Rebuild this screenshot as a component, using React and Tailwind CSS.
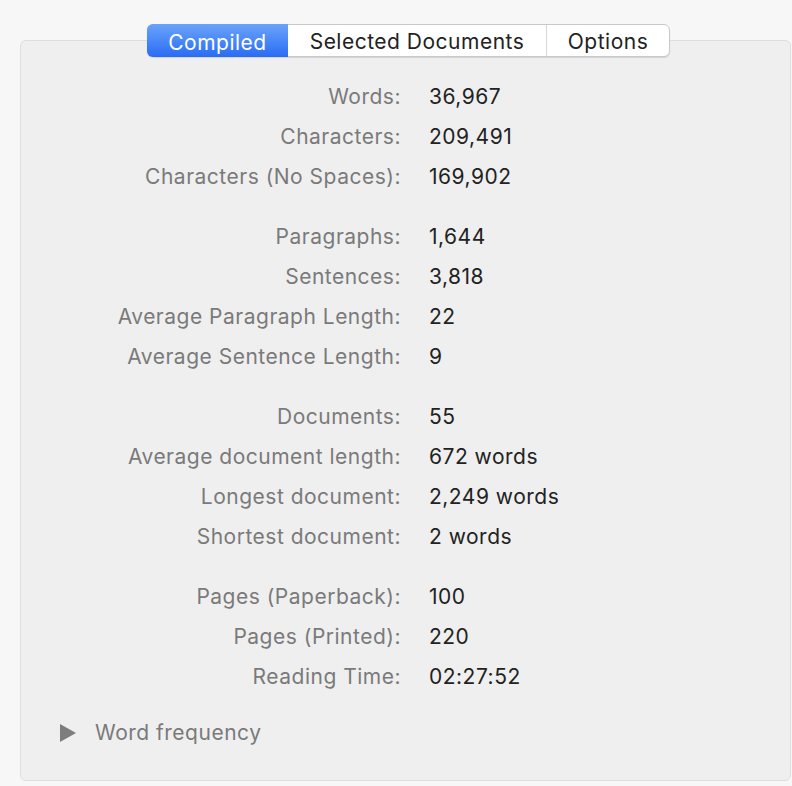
import React from "react";

const groups = [
  [
    ["Words:", "36,967"],
    ["Characters:", "209,491"],
    ["Characters (No Spaces):", "169,902"],
  ],
  [
    ["Paragraphs:", "1,644"],
    ["Sentences:", "3,818"],
    ["Average Paragraph Length:", "22"],
    ["Average Sentence Length:", "9"],
  ],
  [
    ["Documents:", "55"],
    ["Average document length:", "672 words"],
    ["Longest document:", "2,249 words"],
    ["Shortest document:", "2 words"],
  ],
  [
    ["Pages (Paperback):", "100"],
    ["Pages (Printed):", "220"],
    ["Reading Time:", "02:27:52"],
  ],
];

export default function App() {
  return (
    <div
      className="w-[792px] h-[786px] bg-[#f7f7f7] pt-[40px] pl-[20px] pr-[1px] overflow-hidden tracking-[0.5px]"
      style={{ fontFamily: "Inter, 'Noto Sans', sans-serif" }}
    >
      <div className="h-[741px] bg-[#efefef] border border-[#dedede] rounded-[6px] flex flex-col">
        <div className="flex pl-[126px] -mt-[17px]">
          <div className="flex h-[33px] rounded-[6px] border border-[#c9c9c9] bg-white shadow-[0_1px_1px_rgba(0,0,0,0.12)] text-[21px] leading-none">
            <div className="w-[141px] -ml-px -my-px pt-[3px] rounded-l-[6px] bg-gradient-to-b from-[#6aa3fa] to-[#2a6bf4] text-white flex items-center justify-center">
              Compiled
            </div>
            <div className="w-[259px] pt-[2px] flex items-center justify-center text-[#222] border-r border-[#d6d6d6]">
              Selected Documents
            </div>
            <div className="w-[122px] pt-[2px] flex items-center justify-center text-[#222]">
              Options
            </div>
          </div>
        </div>
        <div className="flex flex-col gap-[20px] mt-[20px] text-[21px]">
          {groups.map((g, gi) => (
            <div key={gi} className="flex flex-col">
              {g.map(([l, v]) => (
                <div key={l} className="flex h-[40px] items-center">
                  <div className="w-[380px] text-right text-[#7a7a7a]">{l}</div>
                  <div className="ml-[28px] text-[#222]">{v}</div>
                </div>
              ))}
            </div>
          ))}
        </div>
        <div className="flex h-[40px] items-center mt-[16px] pl-[39px] text-[21px] text-[#7a7a7a]">
          <svg width="16" height="18" viewBox="0 0 16 18" className="mr-[19px]">
            <polygon points="0,0 16,9 0,18" fill="#7d7d7d" />
          </svg>
          Word frequency
        </div>
      </div>
    </div>
  );
}
